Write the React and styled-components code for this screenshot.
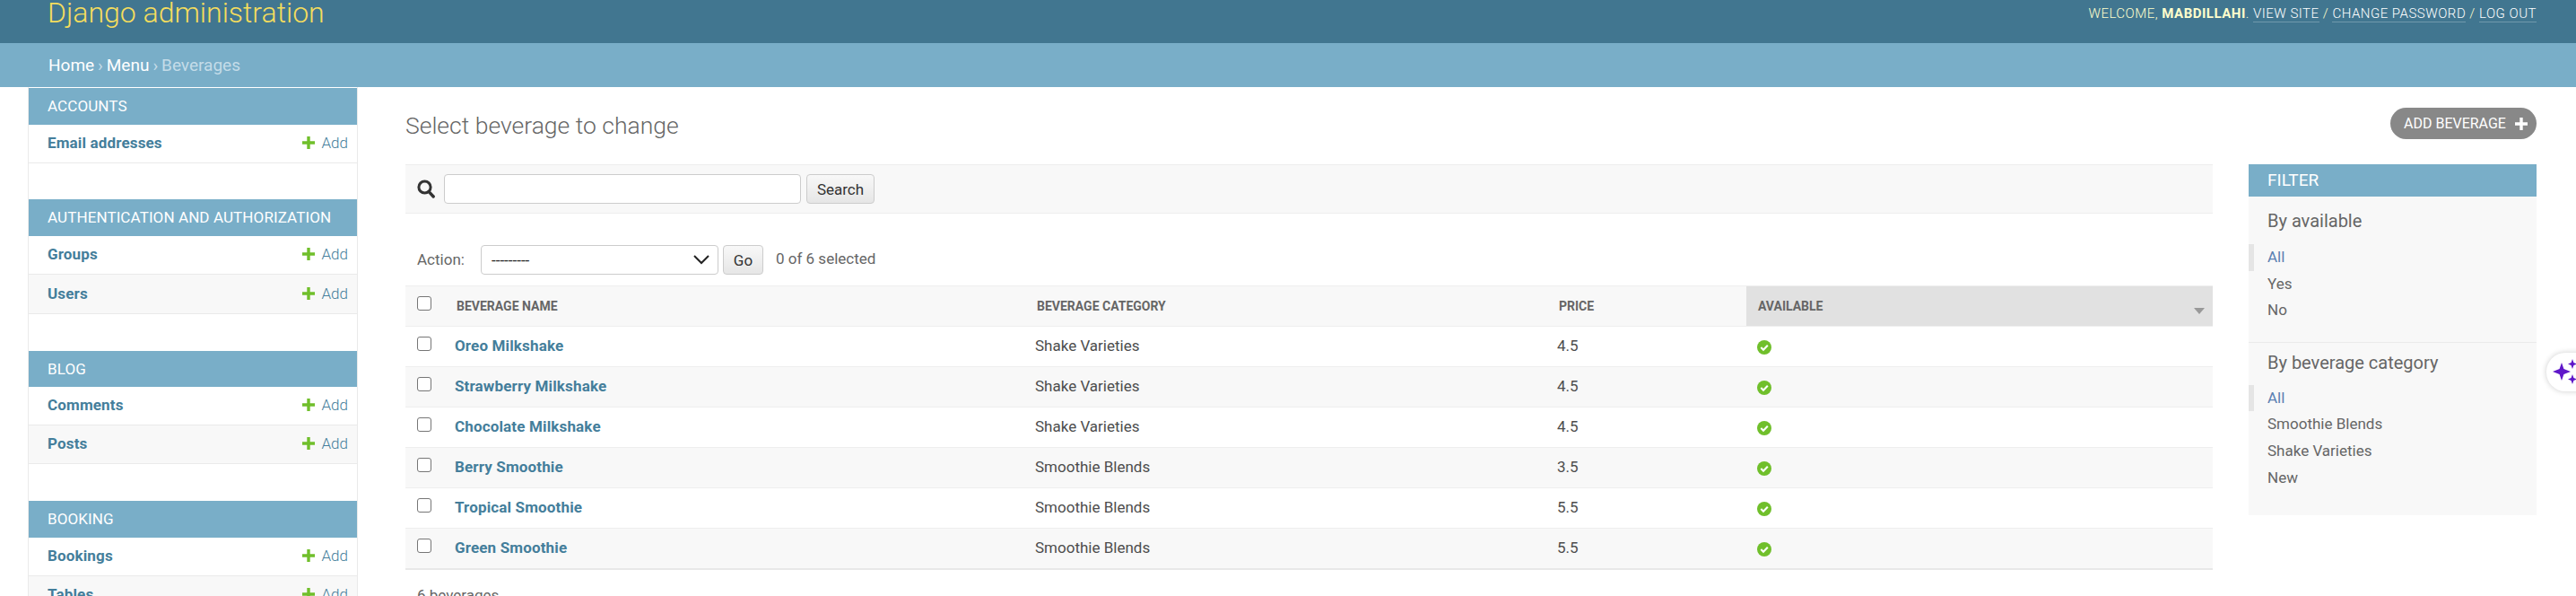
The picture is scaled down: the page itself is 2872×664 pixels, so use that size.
import React from 'react';
import styled, { createGlobalStyle } from 'styled-components';

const sidebarModules = [
  { title: 'Accounts', h: 41, gap: 40, rows: [{ name: 'Email addresses', h: 43 }] },
  {
    title: 'Authentication and Authorization',
    h: 41,
    gap: 41,
    rows: [
      { name: 'Groups', h: 43 },
      { name: 'Users', h: 44 },
    ],
  },
  {
    title: 'Blog',
    h: 40,
    gap: 41,
    rows: [
      { name: 'Comments', h: 43 },
      { name: 'Posts', h: 43 },
    ],
  },
  {
    title: 'Booking',
    h: 41,
    gap: 0,
    rows: [
      { name: 'Bookings', h: 43 },
      { name: 'Tables', h: 43 },
    ],
  },
];

const beverages = [
  { name: 'Oreo Milkshake', category: 'Shake Varieties', price: '4.5' },
  { name: 'Strawberry Milkshake', category: 'Shake Varieties', price: '4.5' },
  { name: 'Chocolate Milkshake', category: 'Shake Varieties', price: '4.5' },
  { name: 'Berry Smoothie', category: 'Smoothie Blends', price: '3.5' },
  { name: 'Tropical Smoothie', category: 'Smoothie Blends', price: '5.5' },
  { name: 'Green Smoothie', category: 'Smoothie Blends', price: '5.5' },
];

const PlusIcon = ({ color = '#70bf2b', size = 14 }) => (
  <svg width={size} height={size} viewBox="0 0 14 14">
    <path fill={color} d="M5.3 0h3.4v5.3H14v3.4H8.7V14H5.3V8.7H0V5.3h5.3z" />
  </svg>
);

const SearchIcon = () => (
  <svg width="20" height="21" viewBox="0 0 20 21">
    <circle cx="8.5" cy="8.5" r="6.6" fill="none" stroke="#333" strokeWidth="3" />
    <path d="M13.2 13.6l5 5.4" fill="none" stroke="#333" strokeWidth="3.4" strokeLinecap="round" />
  </svg>
);

const CheckIcon = () => (
  <svg width="16" height="16" viewBox="0 0 16 16">
    <circle cx="8" cy="8" r="8" fill="#70bf2b" />
    <path d="M4.3 8.1l2.7 2.7 4.8-5" fill="none" stroke="#fff" strokeWidth="2.1" />
  </svg>
);

const SparkleIcon = () => (
  <svg width="30" height="30" viewBox="0 0 30 30">
    <path fill="#5f17c9" d="M10 5l2.4 7.1L20 15l-7.6 2.9L10 25l-2.4-7.1L0 15l7.6-2.9z" />
    <path fill="#5f17c9" d="M22 1l1.4 4.1L27 6.5l-3.6 1.4L22 12l-1.4-4.1L17 6.5l3.6-1.4z" />
    <path fill="#5f17c9" d="M22 18l1.4 4.1L27 23.5l-3.6 1.4L22 29l-1.4-4.1L17 23.5l3.6-1.4z" />
  </svg>
);

const ChevronIcon = () => (
  <svg width="18" height="11" viewBox="0 0 18 11">
    <path d="M1 1l8 8 8-8" fill="none" stroke="#222" strokeWidth="2" />
  </svg>
);

const App = () => (
  <Page>
    <GlobalStyle />
    <Header>
      <Branding>Django administration</Branding>
      <UserTools>
        Welcome, <strong>mabdillahi</strong>. <ToolLink>View site</ToolLink> / <ToolLink>Change password</ToolLink> / <ToolLink>Log out</ToolLink>
      </UserTools>
    </Header>
    <Breadcrumbs>
      <CrumbLink>Home</CrumbLink> › <CrumbLink>Menu</CrumbLink> › Beverages
    </Breadcrumbs>
    <Body>
      <Sidebar>
        {sidebarModules.map((mod) => (
          <Module key={mod.title} $gap={mod.gap}>
            <ModuleTitle $h={mod.h}>{mod.title}</ModuleTitle>
            {mod.rows.map((row, i) => (
              <ModuleRow key={row.name} $alt={i % 2 === 1} $h={row.h}>
                <ModuleLink>{row.name}</ModuleLink>
                <AddLink>
                  <PlusIcon />
                  Add
                </AddLink>
              </ModuleRow>
            ))}
          </Module>
        ))}
      </Sidebar>
      <Content>
        <TitleRow>
          <Title>Select beverage to change</Title>
          <AddButton>
            Add beverage
            <PlusIcon color="#fff" size={14} />
          </AddButton>
        </TitleRow>
        <Columns>
          <ChangeList>
            <Toolbar>
              <SearchIcon />
              <SearchInput type="text" readOnly />
              <GreyButton $w={76}>Search</GreyButton>
            </Toolbar>
            <Actions>
              <ActionLabel>Action:</ActionLabel>
              <ActionSelect>
                <span>---------</span>
                <ChevronIcon />
              </ActionSelect>
              <GreyButton $w={45}>Go</GreyButton>
              <Counter>0 of 6 selected</Counter>
            </Actions>
            <Table>
              <thead>
                <tr>
                  <CheckTh>
                    <Checkbox />
                  </CheckTh>
                  <Th $w={647}>Beverage name</Th>
                  <Th $w={582}>Beverage category</Th>
                  <Th $w={211}>Price</Th>
                  <SortedTh>
                    Available
                    <SortArrow />
                  </SortedTh>
                </tr>
              </thead>
              <tbody>
                {beverages.map((item, i) => (
                  <Row key={item.name} $alt={i % 2 === 1}>
                    <CheckTd>
                      <Checkbox />
                    </CheckTd>
                    <NameTd>{item.name}</NameTd>
                    <Td>{item.category}</Td>
                    <Td>{item.price}</Td>
                    <IconTd>
                      <CheckIcon />
                    </IconTd>
                  </Row>
                ))}
              </tbody>
            </Table>
            <Paginator>6 beverages</Paginator>
          </ChangeList>
          <Filter>
            <FilterTitle>Filter</FilterTitle>
            <FilterGroup $pad={20} $line>
              <FilterHeading $top={13} $bottom={12}>By available</FilterHeading>
              <FilterItem $selected>All</FilterItem>
              <FilterItem>Yes</FilterItem>
              <FilterItem>No</FilterItem>
            </FilterGroup>
            <FilterGroup $pad={27}>
              <FilterHeading $top={8} $bottom={11}>By beverage category</FilterHeading>
              <FilterItem $selected>All</FilterItem>
              <FilterItem>Smoothie Blends</FilterItem>
              <FilterItem>Shake Varieties</FilterItem>
              <FilterItem>New</FilterItem>
            </FilterGroup>
          </Filter>
        </Columns>
      </Content>
    </Body>
    <FloatingWidget>
      <SparkleIcon />
    </FloatingWidget>
  </Page>
);

const GlobalStyle = createGlobalStyle`
  html, body {
    margin: 0;
    height: 100%;
    overflow: hidden;
    background: #fff;
  }
  body {
    font-family: Roboto, "Liberation Sans", sans-serif;
    color: #333;
  }
`;

const Page = styled.div`
  width: 2872px;
  height: 664px;
  overflow: hidden;
`;

const Header = styled.header`
  height: 48px;
  background: #417690;
  display: flex;
  justify-content: space-between;
  padding: 0 44px 0 53px;
  box-sizing: border-box;
  overflow: hidden;
`;

const Branding = styled.div`
  font-size: 32px;
  font-weight: 300;
  line-height: 29px;
  color: #f5dd5d;
`;

const UserTools = styled.div`
  font-size: 15px;
  font-weight: 300;
  line-height: 30px;
  text-transform: uppercase;
  letter-spacing: 0.5px;
  color: #ffc;

  strong {
    font-weight: 700;
    color: #ffc;
  }
`;

const ToolLink = styled.span`
  color: #fff;
  border-bottom: 1px solid rgba(255, 255, 255, 0.25);
`;

const Breadcrumbs = styled.nav`
  height: 49px;
  background: #79aec8;
  color: #c4dce8;
  font-size: 19px;
  line-height: 49px;
  word-spacing: -0.75px;
  padding-left: 54px;
`;

const CrumbLink = styled.span`
  color: #fff;
`;

const Body = styled.div`
  display: flex;
  align-items: flex-start;
`;

const Sidebar = styled.aside`
  width: 366px;
  margin-left: 31px;
  padding-top: 1px;
  border-left: 1px solid #eaeaea;
  border-right: 1px solid #eaeaea;
`;

const Module = styled.section`
  margin-bottom: ${(p) => p.$gap}px;
`;

const ModuleTitle = styled.h2`
  margin: 0;
  height: ${(p) => p.$h}px;
  background: #79aec8;
  color: #fff;
  font-size: 17px;
  font-weight: 400;
  line-height: ${(p) => p.$h}px;
  letter-spacing: 0.1px;
  padding-left: 21px;
  text-transform: uppercase;
`;

const ModuleRow = styled.div`
  height: ${(p) => p.$h}px;
  box-sizing: border-box;
  display: flex;
  align-items: center;
  justify-content: space-between;
  padding: 0 10px 2px 21px;
  background: ${(p) => (p.$alt ? '#f8f8f8' : '#fff')};
  border-bottom: 1px solid #eaeaea;
`;

const ModuleLink = styled.span`
  color: #447e9b;
  font-size: 17px;
  font-weight: 700;
  letter-spacing: 0.15px;
`;

const AddLink = styled.span`
  display: flex;
  align-items: center;
  gap: 7px;
  color: #447e9b;
  font-size: 17px;
  font-weight: 300;
`;

const Content = styled.main`
  flex: 1;
  padding: 0 44px 0 53px;
`;

const TitleRow = styled.div`
  height: 86px;
  display: flex;
  align-items: flex-start;
  justify-content: space-between;
`;

const Title = styled.h1`
  margin: 24px 0 0;
  font-size: 26.5px;
  font-weight: 300;
  line-height: 38px;
  color: #666;
`;

const AddButton = styled.div`
  margin-top: 23px;
  height: 35px;
  width: 163px;
  box-sizing: border-box;
  padding: 0 10px 0 15px;
  display: flex;
  align-items: center;
  justify-content: space-between;
  border-radius: 18px;
  background: #888;
  color: #fff;
  font-size: 16px;
  font-weight: 400;
  text-transform: uppercase;
`;

const Columns = styled.div`
  display: flex;
  align-items: flex-start;
  justify-content: space-between;
`;

const ChangeList = styled.div`
  width: 2015px;
`;

const Toolbar = styled.div`
  height: 55px;
  box-sizing: border-box;
  background: #f8f8f8;
  border-top: 1px solid #eee;
  border-bottom: 1px solid #eee;
  padding-left: 13px;
  display: flex;
  align-items: center;
  gap: 10px;
`;

const SearchInput = styled.input`
  width: 398px;
  height: 33px;
  box-sizing: border-box;
  background: #fff;
  border: 1px solid #ccc;
  border-radius: 4px;
  margin-right: -4px;
`;

const GreyButton = styled.button`
  width: ${(p) => p.$w}px;
  height: 33px;
  box-sizing: border-box;
  padding: 0;
  border: 1px solid #ccc;
  border-radius: 4px;
  background: linear-gradient(#f8f8f8, #e6e6e6);
  color: #333;
  font-family: Roboto, sans-serif;
  font-size: 17px;
`;

const Actions = styled.div`
  height: 80px;
  box-sizing: border-box;
  padding: 35px 0 0 13px;
  display: flex;
  align-items: flex-start;
  gap: 5px;
  font-size: 17px;
`;

const ActionLabel = styled.span`
  width: 66px;
  line-height: 32px;
  color: #666;
`;

const ActionSelect = styled.div`
  width: 265px;
  height: 33px;
  box-sizing: border-box;
  background: #fff;
  border: 1px solid #ccc;
  border-radius: 4px;
  padding: 0 9px 0 11px;
  display: flex;
  align-items: center;
  justify-content: space-between;
  color: #222;
  font-size: 17px;
`;

const Counter = styled.span`
  margin-left: 9px;
  line-height: 30px;
  color: #666;
`;

const Table = styled.table`
  width: 100%;
  border-collapse: collapse;
  table-layout: fixed;
  border-bottom: 2px solid #e8e8e8;
`;

const CheckTh = styled.th`
  width: 55px;
  height: 45px;
  padding: 0 0 0 13px;
  box-sizing: border-box;
  text-align: left;
  vertical-align: top;
  background: #f8f8f8;
  border-top: 1px solid #eee;
  border-bottom: 1px solid #eee;
  line-height: 0;
`;

const Th = styled.th`
  width: ${(p) => p.$w}px;
  height: 45px;
  padding: 0 0 0 2px;
  box-sizing: border-box;
  text-align: left;
  background: #f8f8f8;
  border-top: 1px solid #eee;
  border-bottom: 1px solid #eee;
  color: #666;
  font-size: 14px;
  font-weight: 700;
  text-transform: uppercase;
`;

const SortedTh = styled(Th)`
  position: relative;
  background: #e1e1e1;
  padding-left: 13px;
`;

const SortArrow = styled.span`
  position: absolute;
  right: 9px;
  top: 24px;
  border-left: 6px solid transparent;
  border-right: 6px solid transparent;
  border-top: 7px solid #999;
`;

const Checkbox = styled.span`
  display: inline-block;
  width: 16px;
  height: 16px;
  box-sizing: border-box;
  margin-top: 11px;
  background: #fff;
  border: 1px solid #767676;
  border-radius: 3px;
`;

const Row = styled.tr`
  height: 45px;
  background: ${(p) => (p.$alt ? '#f8f8f8' : '#fff')};
`;

const Td = styled.td`
  padding: 0 0 2px;
  border-bottom: 1px solid #eee;
  color: #4d4d4d;
  font-size: 17px;
  box-sizing: border-box;
`;

const CheckTd = styled(Td)`
  padding: 0 0 0 13px;
  vertical-align: top;
  line-height: 0;
`;

const NameTd = styled(Td)`
  color: #447e9b;
  font-weight: 700;
  letter-spacing: 0.15px;
`;

const IconTd = styled(Td)`
  padding: 2px 0 0 12px;
  line-height: 0;
`;

const Paginator = styled.div`
  padding: 18px 0 0 13px;
  font-size: 17px;
  color: #666;
`;

const Filter = styled.aside`
  width: 321px;
  background: #f8f8f8;
`;

const FilterTitle = styled.h2`
  margin: 0;
  height: 36px;
  background: #79aec8;
  color: #fff;
  font-size: 19px;
  font-weight: 400;
  line-height: 36px;
  padding-left: 21px;
  text-transform: uppercase;
`;

const FilterGroup = styled.div`
  padding-bottom: ${(p) => p.$pad}px;
  border-bottom: ${(p) => (p.$line ? '1px solid #eaeaea' : 'none')};
`;

const FilterHeading = styled.h3`
  margin: 0;
  padding: ${(p) => p.$top}px 0 ${(p) => p.$bottom}px 21px;
  font-size: 20px;
  font-weight: 400;
  line-height: 28px;
  color: #666;
`;

const FilterItem = styled.div`
  height: 29.6px;
  line-height: 29.6px;
  padding-left: ${(p) => (p.$selected ? 15 : 21)}px;
  font-size: 17px;
  color: ${(p) => (p.$selected ? '#5b80b2' : '#666')};
  border-left: ${(p) => (p.$selected ? '6px solid #e5e5e5' : 'none')};
`;

const FloatingWidget = styled.div`
  position: absolute;
  left: 2839px;
  top: 393px;
  width: 60px;
  height: 43px;
  box-sizing: border-box;
  padding: 6px 0 0 7px;
  background: #fff;
  border-radius: 21px 0 0 21px;
  box-shadow: 0 0 6px rgba(0, 0, 0, 0.2);
`;

export default App;
